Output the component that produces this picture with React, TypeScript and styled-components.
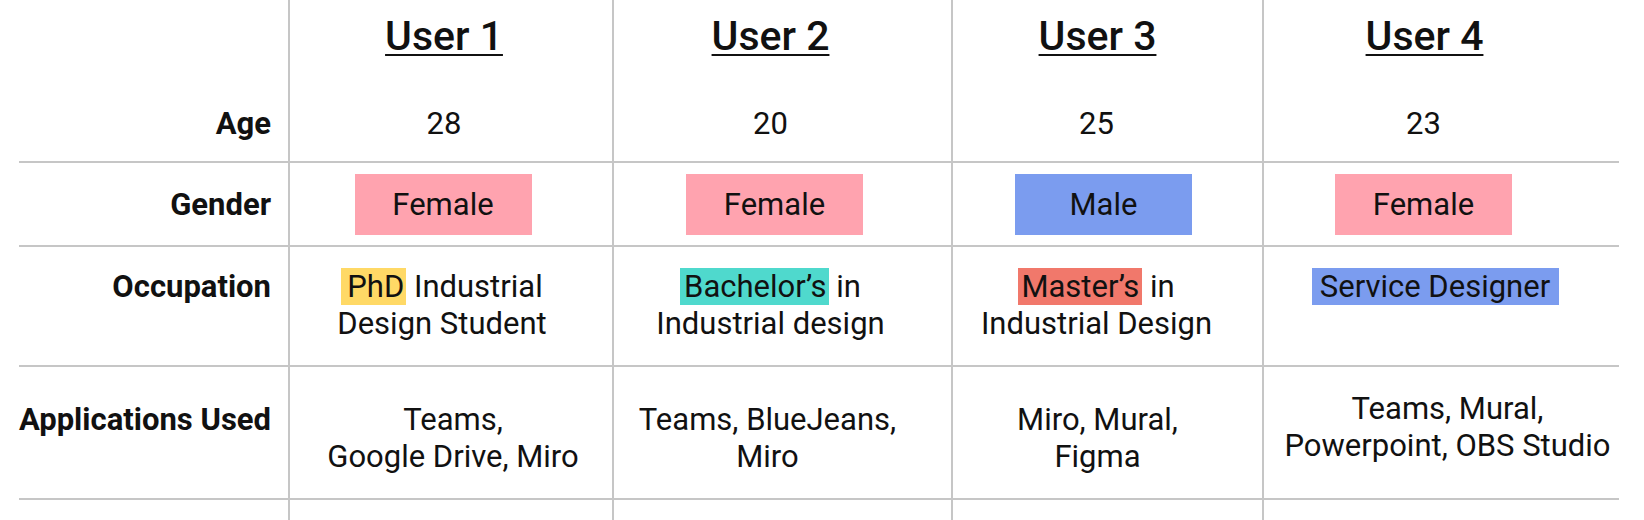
import React from "react";
import styled, { createGlobalStyle } from "styled-components";

const GlobalStyle = createGlobalStyle`
    body {
        margin: 0;
        background: #ffffff;
        font-family: Roboto, "Noto Sans", Arial, sans-serif;
        color: #111111;
    }
`

const LINE = "#c6c6c6";

const Page = styled.div`
    width: 1644px;
    height: 520px;
    overflow: hidden;
    box-sizing: border-box;
    padding-left: 19px;
    background: #ffffff;
`
const Table = styled.div`
    width: 1600px;
    display: flex;
    flex-direction: column;
`
const Row = styled.div<{ $height: number; $line?: boolean }>`
    display: grid;
    grid-template-columns: 269px 324px 339px 311px 357px;
    height: ${p => p.$height}px;
    box-sizing: border-box;
    border-bottom: ${p => (p.$line ? `2px solid ${LINE}` : "none")};
`
const Label = styled.div<{ $top?: number }>`
    display: flex;
    justify-content: flex-end;
    align-items: ${p => (p.$top !== undefined ? "flex-start" : "center")};
    padding: ${p => p.$top ?? 0}px 17px 0 0;
    font-size: 31px;
    line-height: 37px;
    font-weight: 700;
    white-space: nowrap;
`
const Cell = styled.div<{ $shift?: number; $top?: number }>`
    border-left: 2px solid ${LINE};
    display: flex;
    flex-direction: column;
    align-items: center;
    justify-content: ${p => (p.$top !== undefined ? "flex-start" : "center")};
    padding-top: ${p => p.$top ?? 0}px;
    padding-left: ${p => Math.max(0, (p.$shift ?? 0) * 2)}px;
    padding-right: ${p => Math.max(0, -(p.$shift ?? 0) * 2)}px;
    font-size: 31px;
    line-height: 37px;
    text-align: center;
    white-space: nowrap;
`
const Heading = styled.h2`
    margin: 0;
    font-size: 41px;
    line-height: 48px;
    font-weight: 500;
    text-decoration: underline;
    text-decoration-thickness: 2px;
    text-underline-offset: 4px;
`
const Pill = styled.div<{ $color: string }>`
    width: 177px;
    height: 61px;
    display: flex;
    align-items: center;
    justify-content: center;
    background: ${p => p.$color};
`
const Mark = styled.span<{ $color: string; $l: number; $r: number }>`
    background: ${p => p.$color};
    padding: 0 ${p => p.$r}px 0 ${p => p.$l}px;
`

const PINK = "#ffa3af";
const BLUE = "#7b9cef";

type Shift = { head: number; age: number; gender: number; occ: number; apps: number; appsTop: number };

const users: {
    name: string;
    age: string;
    gender: string;
    genderColor: string;
    occupation: React.ReactNode;
    apps: React.ReactNode;
    shift: Shift;
}[] = [
    {
        name: "User 1",
        age: "28",
        gender: "Female",
        genderColor: PINK,
        occupation: <><Mark $color="#ffd966" $l={6} $r={2}>PhD</Mark> Industrial<br />Design Student</>,
        apps: <>Teams,<br />Google Drive, Miro</>,
        shift: { head: -7, age: -7, gender: -8, occ: -9, apps: 2, appsTop: 34 },
    },
    {
        name: "User 2",
        age: "20",
        gender: "Female",
        genderColor: PINK,
        occupation: <><Mark $color="#4fd9cd" $l={4} $r={2}>Bachelor’s</Mark> in<br />Industrial design</>,
        apps: <>Teams, BlueJeans,<br />Miro</>,
        shift: { head: -12, age: -12, gender: -8, occ: -12, apps: -15, appsTop: 34 },
    },
    {
        name: "User 3",
        age: "25",
        gender: "Male",
        genderColor: BLUE,
        occupation: <><Mark $color="#f1786b" $l={3} $r={3}>Master’s</Mark> in<br />Industrial Design</>,
        apps: <>Miro, Mural,<br />Figma</>,
        shift: { head: -10, age: -11, gender: -4, occ: -11, apps: -10, appsTop: 34 },
    },
    {
        name: "User 4",
        age: "23",
        gender: "Female",
        genderColor: PINK,
        occupation: <><Mark $color={BLUE} $l={8} $r={9}>Service Designer</Mark></>,
        apps: <>Teams, Mural,<br />Powerpoint, OBS Studio</>,
        shift: { head: -17, age: -18, gender: -18, occ: -6, apps: 6, appsTop: 23 },
    },
];

const App = () => {
    return (
        <Page>
            <GlobalStyle />
            <Table>
                <Row $height={85}>
                    <Label />
                    {users.map(u => (
                        <Cell key={u.name} $shift={u.shift.head} $top={12}>
                            <Heading>{u.name}</Heading>
                        </Cell>
                    ))}
                </Row>
                <Row $height={78} $line>
                    <Label>Age</Label>
                    {users.map(u => (
                        <Cell key={u.name} $shift={u.shift.age}>{u.age}</Cell>
                    ))}
                </Row>
                <Row $height={84} $line>
                    <Label>Gender</Label>
                    {users.map(u => (
                        <Cell key={u.name} $shift={u.shift.gender}>
                            <Pill $color={u.genderColor}>{u.gender}</Pill>
                        </Cell>
                    ))}
                </Row>
                <Row $height={120} $line>
                    <Label $top={21}>Occupation</Label>
                    {users.map(u => (
                        <Cell key={u.name} $shift={u.shift.occ} $top={21}>
                            <div>{u.occupation}</div>
                        </Cell>
                    ))}
                </Row>
                <Row $height={133} $line>
                    <Label $top={34}>Applications Used</Label>
                    {users.map(u => (
                        <Cell key={u.name} $shift={u.shift.apps} $top={u.shift.appsTop}>
                            <div>{u.apps}</div>
                        </Cell>
                    ))}
                </Row>
                <Row $height={20}>
                    <Label />
                    {users.map(u => (
                        <Cell key={u.name} />
                    ))}
                </Row>
            </Table>
        </Page>
    )
}

export default App
